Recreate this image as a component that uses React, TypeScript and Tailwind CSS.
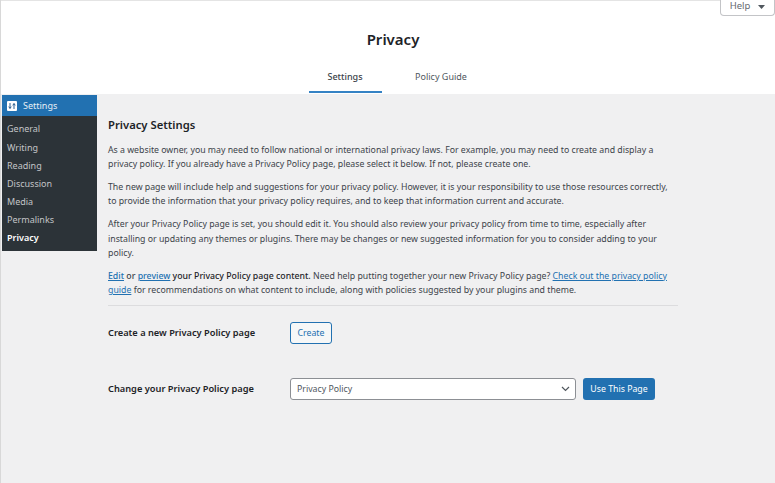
export default function App() {
  const menu = ['General', 'Writing', 'Reading', 'Discussion', 'Media', 'Permalinks'];
  return (
    <div className="h-[483px] w-[775px] overflow-hidden bg-[#f0f0f1] text-[#3c434a] border-l border-[#d8d8d8] font-['Noto_Sans',sans-serif]">
      <div className="relative h-[94px] bg-white border-t border-[#e4e4e4] flex flex-col items-center">
        <div className="absolute right-0 top-[-1px] h-[16px] w-[55px] bg-white border border-t-0 border-[#c3c4c7] rounded-b pb-[2px] text-[9.5px] text-[#646970] flex items-center justify-center gap-2">
          <span>Help</span>
          <svg width="7" height="4" viewBox="0 0 7 4"><path d="M0 0h7L3.5 4z" fill="#50575e" /></svg>
        </div>
        <h1 className="mt-[27px] ml-[10px] text-[15px] leading-[22px] font-semibold text-[#1d2327]">Privacy</h1>
        <div className="mt-[13px] ml-[33px] flex text-[9px] h-[30px]">
          <div className="w-[73px] flex items-center justify-center border-b-[2px] border-[#3582c4] font-medium text-[#3c434a]">Settings</div>
          <div className="w-[119px] flex items-center justify-center pb-[2px] text-[#50575e]">Policy Guide</div>
        </div>
      </div>
      <div className="flex">
        <div className="w-[95px] h-[156px] ml-px mr-px mt-px bg-[#2c3338] shrink-0">
          <div className="h-[21px] bg-[#2271b1] flex items-center gap-[6px] pl-[5px] text-[#e6eef5] text-[9px]">
            <svg width="10" height="10" viewBox="0 0 10 10">
              <rect width="10" height="10" rx="1" fill="#fff" />
              <path d="M3 2v5M1.8 5.6 3 7.6l1.2-2M7 8V3M5.8 4.4 7 2.4l1.2 2" fill="none" stroke="#2c5f8f" strokeWidth="1" />
            </svg>
            <span>Settings</span>
          </div>
          <div className="flex flex-col text-[9px] text-[#c3c4c7] pl-[5px] pt-[4px]">
            {menu.map((m) => (
              <div key={m} className="h-[18.2px] flex items-center">{m}</div>
            ))}
            <div className="h-[18.2px] flex items-center font-semibold text-white">Privacy</div>
          </div>
        </div>
        <div className="ml-[10px] w-[570px] pt-[22px] text-[8.75px] leading-[14.4px]">
          <h2 className="text-[11.25px] leading-[18px] font-semibold text-[#1d2327]">Privacy Settings</h2>
          <p className="mt-[8.5px]">As a website owner, you may need to follow national or international privacy laws. For example, you may need to create and display a privacy policy. If you already have a Privacy Policy page, please select it below. If not, please create one.</p>
          <p className="mt-[8.5px]">The new page will include help and suggestions for your privacy policy. However, it is your responsibility to use those resources correctly, to provide the information that your privacy policy requires, and to keep that information current and accurate.</p>
          <p className="mt-[8.5px]">After your Privacy Policy page is set, you should edit it. You should also review your privacy policy from time to time, especially after installing or updating any themes or plugins. There may be changes or new suggested information for you to consider adding to your policy.</p>
          <p className="mt-[8.5px]"><a className="font-medium text-[#2271b1] underline">Edit</a> <strong className="font-medium">or</strong> <a className="font-medium text-[#2271b1] underline">preview</a> <strong className="font-medium text-[#1d2327]">your Privacy Policy page content.</strong> Need help putting together your new Privacy Policy page? <a className="text-[#2271b1] underline">Check out the privacy policy</a> <a className="text-[#2271b1] underline">guide</a> for recommendations on what content to include, along with policies suggested by your plugins and theme.</p>
          <div className="mt-[7.5px] border-t border-[#dcdcde]" />
          <div className="mt-[15.5px] flex items-center">
            <div className="w-[182px] pt-px text-[9.25px] font-semibold text-[#1d2327]">Create a new Privacy Policy page</div>
            <div className="h-[22px] w-[42px] pt-px border border-[#2271b1] bg-[#f6f7f7] rounded-[3px] text-[#2271b1] flex items-center justify-center">Create</div>
          </div>
          <div className="mt-[34px] flex items-center">
            <div className="w-[182px] pt-[2px] text-[9.25px] font-semibold text-[#1d2327]">Change your Privacy Policy page</div>
            <div className="h-[22px] w-[286px] bg-white border border-[#8c8f94] rounded-[3px] flex items-center justify-between pl-[6px] pr-[5px] text-[#50575e]">
              <span className="pt-[2px]">Privacy Policy</span>
              <svg width="9" height="6" viewBox="0 0 9 6"><path d="M1 1l3.5 3.5L8 1" fill="none" stroke="#50575e" strokeWidth="1.2" /></svg>
            </div>
            <div className="ml-[7px] h-[22px] w-[72px] pt-[2px] bg-[#2271b1] rounded-[3px] text-white flex items-center justify-center">Use This Page</div>
          </div>
        </div>
      </div>
    </div>
  );
}
